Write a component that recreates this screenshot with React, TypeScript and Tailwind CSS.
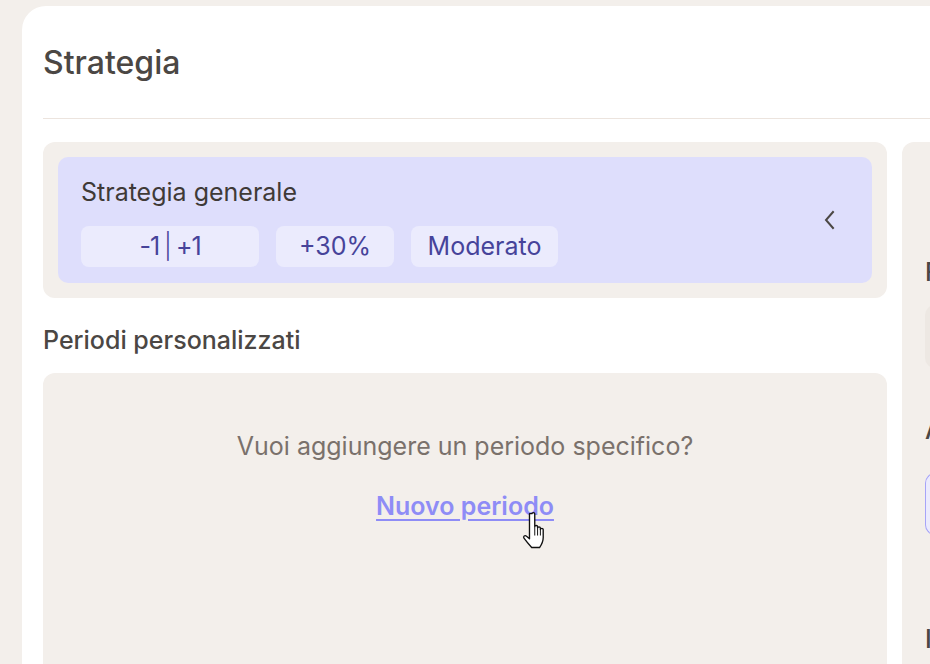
import React from "react";

function Chevron() {
  return (
    <svg width="12" height="20" viewBox="0 0 12 20" fill="none">
      <path d="M9 2 L2 10 L9 18" stroke="#4b4744" strokeWidth="2" strokeLinecap="square" />
    </svg>
  );
}

function HandCursor() {
  return (
    <svg width="28" height="38" viewBox="0 0 21 31" className="absolute left-[521px] top-[511px]">
      <path
        d="M8 2.2c0-1.2 2.3-1.2 2.3 0v10.5c0-1.2 2.3-1.2 2.3 0v1.2c0-1.2 2.3-1.2 2.3 0v1.2c0-1.2 2.3-1.2 2.3 0v6.5c0 3.2-1.8 6.5-3 8.2H7.8c-1.8-2-4.8-5.5-6.3-7.6-1-1.4.8-2.9 2.1-1.6L6 22.6V2.2z"
        fill="#fff"
        stroke="#111"
        strokeWidth="1.1"
        strokeLinejoin="round"
      />
      <path d="M10.3 13v7M12.6 14v6M14.9 15v5" stroke="#111" strokeWidth="0.8" />
    </svg>
  );
}

export default function App() {
  return (
    <div
      className="relative h-[664px] w-[930px] overflow-hidden bg-[#f3efeb] pl-[22px] pt-[6px]"
      style={{ fontFamily: "Inter, 'Noto Sans', sans-serif" }}
    >
      <div className="h-[700px] w-[960px] rounded-tl-[24px] bg-white pl-[21px]">
        <div className="flex h-[112px] items-center pt-[1px]">
          <h1 className="text-[32px] font-medium leading-[40px] text-[#4b4744]">Strategia</h1>
        </div>
        <div className="h-px bg-[#ece4de]" />
        <div className="mt-[23px] flex gap-[15px]">
          <div className="w-[844px] shrink-0">
            <div className="rounded-[12px] bg-[#f3efeb] p-[15px]">
              <div className="flex h-[126px] justify-between rounded-[10px] bg-[#dedefc] pl-[23px] pr-[36px] pt-[21px]">
                <div className="flex flex-col">
                  <div className="text-[25px] leading-[28px] text-[#3f3a37]">Strategia generale</div>
                  <div className="mt-[20px] flex gap-[17px]">
                    <div className="flex h-[41px] w-[178px] items-center justify-center rounded-[8px] bg-[#ebebfd] text-[25px] text-[#46439a]">
                      <span className="tracking-[-1px]">-1</span>
                      <span className="ml-[5px] mr-[4px] font-light">|</span>
                      <span className="tracking-[-1px]">+1</span>
                    </div>
                    <div className="flex h-[41px] w-[118px] items-center justify-center rounded-[8px] bg-[#ebebfd] text-[25px] text-[#46439a]">
                      +30%
                    </div>
                    <div className="flex h-[41px] w-[147px] items-center justify-center rounded-[8px] bg-[#ebebfd] text-[25px] text-[#46439a]">
                      Moderato
                    </div>
                  </div>
                </div>
                <div className="-mt-[21px] flex items-center">
                  <Chevron />
                </div>
              </div>
            </div>
            <div className="mt-[27px] text-[25px] font-medium leading-[30px] text-[#4b4744]">Periodi personalizzati</div>
            <div className="mt-[18px] flex h-[320px] flex-col items-center rounded-[12px] bg-[#f3efeb] pt-[58px]">
              <div className="text-[25px] leading-[30px] text-[#7a716b]">Vuoi aggiungere un periodo specifico?</div>
              <a className="mt-[30px] text-[25px] font-semibold leading-[30px] text-[#8e8cf6] underline decoration-[2px] underline-offset-[4px]">
                Nuovo periodo
              </a>
            </div>
          </div>
          <div className="h-[560px] flex-1 rounded-tl-[12px] bg-[#f3efeb] pl-[23px]">
            <div className="mt-[115px] text-[25px] font-medium leading-[30px] text-[#4b4744]">F</div>
            <div className="mt-[18px] h-[63px] rounded-l-[10px] bg-[#ede8e3]" />
            <div className="mt-[47px] text-[25px] font-medium leading-[30px] text-[#4b4744]">A</div>
            <div className="mt-[28px] h-[62px] rounded-l-[10px] border border-r-0 border-[#a6a4f8] bg-[#ebebfd]" />
            <div className="mt-[89px] text-[25px] font-medium leading-[30px] text-[#4b4744]">I</div>
          </div>
        </div>
      </div>
      <HandCursor />
    </div>
  );
}
